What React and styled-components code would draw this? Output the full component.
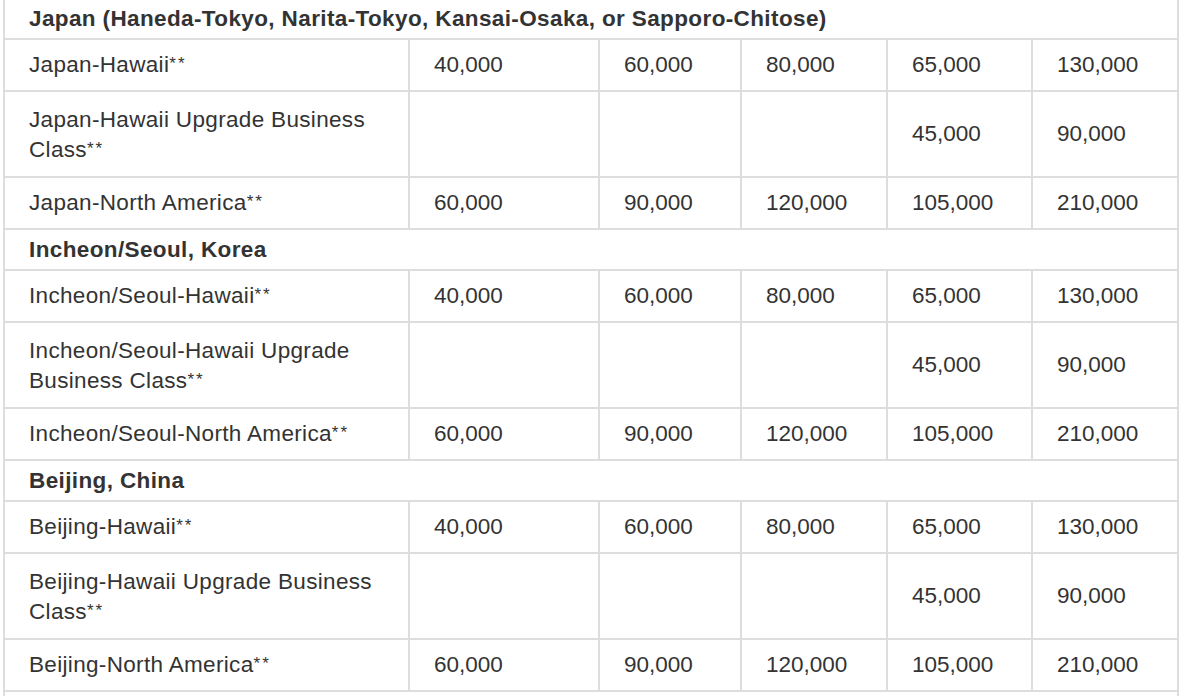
import React from 'react';
import styled, { createGlobalStyle } from 'styled-components';

const GlobalStyle = createGlobalStyle`
  html, body {
    margin: 0;
    padding: 0;
    background: #ffffff;
  }
  body {
    font-family: "Liberation Sans", Arial, Helvetica, sans-serif;
    color: #333333;
  }
`;

const Table = styled.div`
  display: grid;
  grid-template-columns: 405px 190px 142px 146px 145px 146px;
  width: max-content;
  margin: -3px 0 0 3px;
  border-left: 2px solid #dddddd;
  border-top: 2px solid #dddddd;
  font-size: 22.5px;
  line-height: 30px;
  color: #333333;
`;

const Cell = styled.div`
  box-sizing: border-box;
  display: flex;
  align-items: center;
  padding: 10px 16px 10px 24px;
  border-right: 2px solid #dddddd;
  border-bottom: 2px solid #dddddd;
`;

const LabelCell = styled.div`
  box-sizing: border-box;
  display: flex;
  align-items: center;
  padding: ${(p) => (p.$tall ? '13px 16px 11px 24px' : '10px 16px 10px 24px')};
  border-right: 2px solid #dddddd;
  border-bottom: 2px solid #dddddd;
  letter-spacing: 0.33px;
`;

const LabelText = styled.span`
  display: block;
`;

const Stars = styled.span`
  font-size: 17px;
  line-height: 1;
  letter-spacing: 2px;
  vertical-align: 3px;
`;

const SectionCell = styled.div`
  grid-column: 1 / -1;
  box-sizing: border-box;
  padding: 4.5px 24px;
  font-weight: 700;
  letter-spacing: 0.38px;
  border-right: 2px solid #dddddd;
  border-bottom: 2px solid #dddddd;
`;

const sections = [
  {
    title: 'Japan (Haneda-Tokyo, Narita-Tokyo, Kansai-Osaka, or Sapporo-Chitose)',
    place: 'Japan',
  },
  { title: 'Incheon/Seoul, Korea', place: 'Incheon/Seoul' },
  { title: 'Beijing, China', place: 'Beijing' },
];

const buildRows = (place) => [
  { label: `${place}-Hawaii`, values: ['40,000', '60,000', '80,000', '65,000', '130,000'] },
  {
    label: `${place}-Hawaii Upgrade Business Class`,
    values: ['', '', '', '45,000', '90,000'],
    tall: true,
  },
  { label: `${place}-North America`, values: ['60,000', '90,000', '120,000', '105,000', '210,000'] },
];

export default function App() {
  return (
    <>
      <GlobalStyle />
      <Table>
        {sections.map((s) => (
          <React.Fragment key={s.title}>
            <SectionCell>{s.title}</SectionCell>
            {buildRows(s.place).map((r) => (
              <React.Fragment key={r.label}>
                <LabelCell $tall={r.tall}>
                  <LabelText>
                    {r.label}
                    <Stars>**</Stars>
                  </LabelText>
                </LabelCell>
                {r.values.map((v, i) => (
                  <Cell key={i}>{v}</Cell>
                ))}
              </React.Fragment>
            ))}
          </React.Fragment>
        ))}
        <SectionCell>&nbsp;</SectionCell>
      </Table>
    </>
  );
}
